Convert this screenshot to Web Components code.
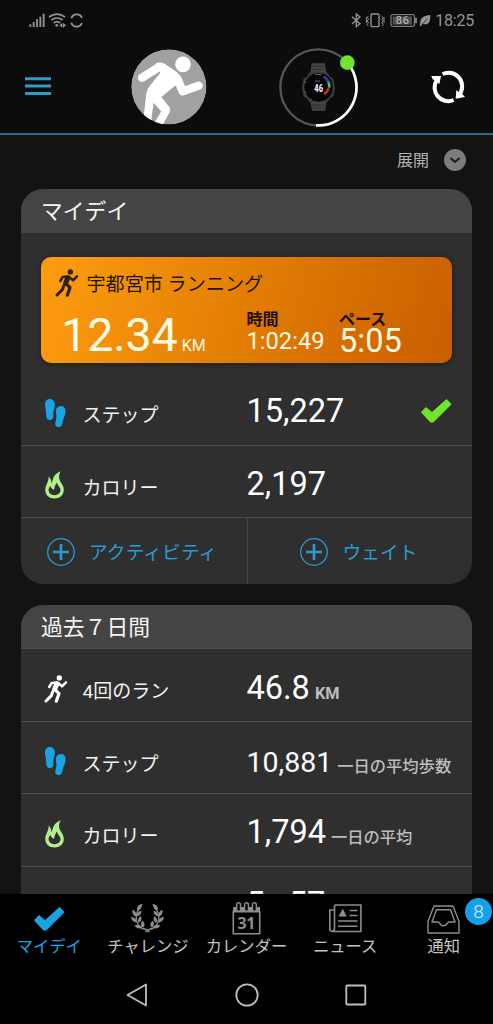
<!DOCTYPE html>
<html lang="ja">
<head>
<meta charset="utf-8">
<title>マイデイ</title>
<style>
html,body{margin:0;background:#131313}
body{width:493px;height:1024px;overflow:hidden;font-family:Roboto,"Noto Sans CJK JP",sans-serif;color:#fff}
</style>
</head>
<body>
<day-app></day-app>
<script>
const define = (name, html) => {
  const t = document.createElement('template');
  t.innerHTML = '<style>*{box-sizing:border-box}svg{display:block}</style>' + html;
  customElements.define(name, class extends HTMLElement {
    constructor() {
      super();
      this.attachShadow({mode: 'open'}).append(t.content.cloneNode(true));
    }
  });
};

const BRANCH = '<path fill="none" stroke="currentColor" stroke-width="1.300" d="M9.500 3.500C3.500 9 3.500 19 11 24.500C13.500 24.500 16 25.500 18.500 28"/><path d="M11.500 0C7 .5 5 3.500 6.800 7C9.500 5.500 11 3 11.500 0ZM1.500 5.800C1 9.500 2.500 12 5.300 12.500C5.800 9 4.500 7 1.500 5.800ZM10.500 6.800C7.500 7.200 5.500 9.500 5.800 12.300C9 12 10.300 10 10.500 6.800ZM0 12.800C.5 16.500 2.500 18.500 6 18.500C5.600 15.200 3.500 13.300 0 12.800ZM9.800 12C7.200 13.700 6.300 16 7.400 18.700C10.400 17.700 11 15 9.800 12ZM3.500 21.500C5.500 24.500 8.500 25.300 11.500 23.500C9.500 20.700 6.700 20 3.500 21.500ZM11 16.800C9.400 19.500 9.800 22 12 23.800C14.500 21.800 13.900 18.700 11 16.800Z"/>';
const ICONS = {
  run: [24, 28, '<circle cx="15.3" cy="2.9" r="2.7" fill="currentColor"/><g fill="none" stroke="currentColor" stroke-linecap="round" stroke-linejoin="round"><path stroke-width="2.500" d="M5.2 12L7.7 8L13.5 7.4L18 11.4L22 7.4"/><path stroke-width="5" d="M12.8 9L10.6 14.2"/><path stroke-width="3.200" d="M11 14.6L15 18.6L12.3 26.2"/><path stroke-width="3" d="M8.6 17L7.4 20.6L2 26"/></g>'],
  steps: [21, 29, '<path fill="currentColor" d="M4.700 0C8 0 9.900 2.600 9.900 5.400C9.900 9 8.200 11 8.300 14C8.400 17 9 21 4.900 21C1.300 21 1.300 18 1.100 14C.9 10 0 8.500 0 5.200C0 2.300 1.700 0 4.700 0ZM16.400 7C13 6.600 11.100 9 10.900 12C10.800 15 12 17 11.200 20.300C10.300 24 9.100 27.200 12.800 27.900C16.400 28.500 17.200 26 17.900 22C18.700 18 20.400 16.500 20.600 12.700C20.800 9.500 19.200 7.300 16.400 7Z"/>'],
  flame: [19, 28, '<path fill="currentColor" fill-rule="evenodd" d="M15.800 .2C13.300 4 13.600 8 15.900 11.500C17.900 14.500 18.800 16.300 18.800 19C18.800 24 14.600 27.500 9.500 27.500C4.300 27.500 .3 24 .3 19C.3 14 4 11 3.600 5.600C5.600 7.800 6.300 9.300 6.500 12.200C8.400 8 8 3 15.800 .2ZM12 11.500C10.800 13 9.500 15.500 9 18.900C6.800 17.900 5.900 16.800 5.400 15C4.200 16.300 3.600 17.400 3.600 19C3.600 22 6 24.200 9.500 24.200C13 24.200 15.500 22 15.500 19C15.500 15.900 12.500 15 12 11.500Z"/>'],
  check: [31, 24, '<path fill="currentColor" stroke="currentColor" stroke-width="1.600" stroke-linejoin="round" d="M1 13.200L5 9L11 14L25.500 1L29.600 5.300L12 22.700L9.800 22.700Z"/>'],
  plus: [28, 28, '<g fill="none" stroke="currentColor"><circle cx="14" cy="14" r="13.300" stroke-width="1.300"/><path stroke-width="2.600" d="M14 6v16M6 14h16"/></g>'],
  laurel: [33, 28, '<g fill="currentColor">' + BRANCH + '</g><g transform="translate(33 0) scale(-1 1)" fill="currentColor">' + BRANCH + '</g>'],
  calendar: [29, 33, '<path fill="currentColor" d="M1 5h27v5.500H1z"/><path fill="none" stroke="currentColor" stroke-width="1.600" d="M1.300 9v22.800h26.400V9"/><g fill="#000" stroke="currentColor" stroke-width="1.400"><rect x="4.700" y=".8" width="3.800" height="8.500" rx="1.900"/><rect x="12.600" y=".8" width="3.800" height="8.500" rx="1.900"/><rect x="20.500" y=".8" width="3.800" height="8.500" rx="1.900"/></g><text x="14.500" y="26.800" text-anchor="middle" font-family="Noto Sans" font-weight="700" font-size="16" textLength="18" fill="currentColor">31</text>'],
  news: [33, 29, '<g fill="none" stroke="currentColor" stroke-width="1.600"><path d="M5.500 1h26.400v26.500H4C2 27.500 .8 26.500 .8 24.500V6H5.500M5.500 1v22.500C5.500 26 5 27.300 3.500 27.300"/><path d="M20.500 6.500h8M20.500 11.500h8M9 17h19.500M9 22.300h19.500"/></g><path fill="currentColor" d="M9.500 12.500L13.700 4.800L17.900 12.500Z"/>'],
  inbox: [33, 29, '<g fill="none" stroke="currentColor" stroke-width="1.400" stroke-linejoin="round"><path d="M7 1h19L32 16.500V28H1V16.500Z"/><path d="M9.500 4.700h14L28 17h-6.500l-3 3.500h-4l-3-3.500H5Z"/></g>'],
};
customElements.define('app-icon', class extends HTMLElement {
  connectedCallback() {
    const [w, h, body] = ICONS[this.getAttribute('name')];
    const root = this.shadowRoot || this.attachShadow({mode: 'open'});
    root.innerHTML = `<style>:host{display:block;flex:none}svg{display:block;overflow:visible}</style><svg width="${w}" height="${h}" viewBox="0 0 ${w} ${h}">${body}</svg>`;
  }
});

define('status-bar', `
<style>
:host{display:flex;height:40px;padding:0 19px 0 29px;align-items:center;justify-content:space-between;color:#949494}
.r{display:flex;align-items:center}
.t{font-size:16px;line-height:20px;margin-left:4px;letter-spacing:-.2px;padding-top:1px}
</style>
<svg width="56" height="18" viewBox="87 30 168 54" fill="none" stroke="currentColor">
<path stroke-width="5.500" d="M91 78V70M101 78V63M111 78V55M121 78V47M131 78V38"/>
<path stroke-width="5" d="M147 48Q171 31 195 48M154 57Q171 45 188 57M161 66Q171 58 181 66"/><circle cx="170" cy="73" r="4" fill="currentColor" stroke="none"/>
<path fill="currentColor" stroke="none" d="M187 66v14l-9-7zM189 66v14l9-7z"/>
<path stroke-width="5.500" d="M214 52A17 17 0 0 1 246 51M214 65A17 17 0 0 0 246 66"/></svg>
<div class="r">
<svg width="80" height="18" viewBox="328 30 240 54" fill="none" stroke="currentColor" stroke-width="4">
<path d="M331 47L355 68L344 77V39L355 48L331 69"/>
<rect x="388" y="39" width="24" height="38" rx="3"/><path d="M380 45l-4 5 5 5-5 5 5 5-5 5 4 5M420 45l5 5-5 5 5 5-5 5 5 5-5 5M374 48v18M427 48v18" stroke-width="3"/>
<rect x="448" y="41" width="70" height="35" rx="4" stroke-width="3"/><rect x="453" y="46" width="58" height="25" fill="#505050" stroke="none"/><path stroke-width="5" d="M523 50v17"/>
<text x="482" y="69" text-anchor="middle" font-family="Roboto" font-size="33" textLength="39" fill="#c0c0c0" stroke="none">86</text>
<path fill="currentColor" stroke="none" d="M566 42C548 44 537 50 536 61C536 68 535 72 534 76L538 75L543 68C562 76 566 60 566 42Z"/><path stroke="#0c0c0c" stroke-width="2" d="M541 71L557 53"/></svg>
<span class="t">18:25</span></div>`);

define('app-header', `
<style>
:host{display:grid;grid-template-columns:131.300px 147px 149px 1fr;height:95px;align-items:start;border-bottom:2px solid #356a87}
.m{margin:37.200px 0 0 25px;width:26px;display:block}
.a{margin-top:9px}.w{margin-top:6.700px}.s{margin:29px 0 0 3px}
</style>
<svg class="m" width="26" height="19" viewBox="0 0 26 19"><path stroke="#3397c8" stroke-width="3" d="M0 1.800h26M0 9.100h26M0 16.400h26"/></svg>
<svg class="a" width="75.700" height="75.700" viewBox="394 147 227 227"><defs><clipPath id="c"><circle cx="507.500" cy="260.500" r="113"/></clipPath></defs>
<g clip-path="url(#c)"><circle cx="507.500" cy="260.500" r="113" fill="#a1a1a1"/><circle cx="550" cy="193" r="23.500" fill="#fff"/>
<path fill="#fff" d="M468 190Q481 184 495 191L532 217Q545 228 546 244L550 262L526 257L485 291L509 321Q514 328 509 338L484 384H455L485 334L462 308L456 350V384H428L440 280Q442 266 453 254L482 218Z"/>
<path fill="none" stroke="#fff" stroke-width="25" stroke-linecap="round" stroke-linejoin="round" d="M427 233L478 201M533 236L549 274L597 257"/></g></svg>
<svg class="w" width="80.700" height="80.700" viewBox="105 140 242 242">
<circle cx="226" cy="261" r="114" fill="none" stroke="#555" stroke-width="7"/><path fill="none" stroke="#fff" stroke-width="8" d="M219 375A114 114 0 0 0 313 187"/>
<path fill="#444" d="M206 189h40l5 35h-50zM201 300h50l-4 31h-40z"/><path stroke="#303030" stroke-width="3" d="M208 198h37M207 207h40M206 315h42M207 323h39"/>
<path fill="#3a3a3a" d="M200 216h52l10 14 9 5 5 27-5 26-9 5-11 14h-50l-11-14-8-4-5-27 4-27 10-5z"/><circle cx="227" cy="261" r="45" fill="#070707" stroke="#606060" stroke-width="2"/>
<g fill="none" stroke-width="8"><path stroke="#4a35a5" d="M242 229A34 34 0 0 1 255 242"/><path stroke="#207fb4" d="M255 242L258 250"/><path stroke="#63c337" d="M257 248Q260 255 258 262"/><path stroke="#bd3c1c" d="M257 264Q253 275 243 281"/></g>
<path stroke="#999" stroke-width="2" d="M216 222h20M216 242h15M190 247l-5-2M190 275l-5 2M206 295l-3 4"/>
<text x="227" y="274" text-anchor="middle" font-family="Roboto" font-weight="700" font-size="33" textLength="26" lengthAdjust="spacingAndGlyphs" fill="#fff">46</text>
<circle cx="313" cy="187" r="22" fill="#70e52c"/></svg>
<svg class="s" width="36" height="36" viewBox="562 207 108 108"><g fill="none" stroke="#fff" stroke-width="12"><path d="M600 222A41 41 0 0 1 650 284"/><path d="M633 300A41 41 0 0 1 583 239"/></g><path fill="#fff" d="M566 228L595 228L590 253L582 245L570 238ZM667 291L639 296L641 270L650 278L661 284Z"/></svg>`);

define('expand-toggle', `
<style>:host{display:flex;justify-content:flex-end;align-items:center;gap:15px;height:54px;padding:0 27px 4px 0;color:#b4b4b4;font-size:16px;line-height:22px}
span{padding-top:1.500px}</style>
<span><slot></slot></span><svg width="22" height="22" viewBox="0 0 22 22"><circle cx="11" cy="11" r="11" fill="#7c7c7c"/><path fill="none" stroke="#191919" stroke-width="2" d="M6.500 9l4.500 4 4.500-4"/></svg>`);

define('summary-card', `
<style>:host{display:block;margin:0 21px 21px 20.500px;border-radius:22px;background:#2f2f2f;overflow:hidden}
header{height:var(--head,43.500px);background:#444;padding:1px 0 0 20.500px;font-size:21.800px;line-height:43px;color:#f4f4f4;border-bottom:var(--line,0)}</style>
<header><slot name="title"></slot></header><slot></slot>`);

define('activity-tile', `
<style>:host{display:block;margin:24px 20px 0 20.500px;height:106px;border-radius:10px;padding:12px 0 0 13.500px;background:linear-gradient(105deg,#ff9d10,#e27d04 50%,#c95e00);box-shadow:0 1px 5px #1b1b1b;color:#fffbe4}
.h{display:flex;gap:8px;color:#1e1305;font-size:19.100px;line-height:28px;height:28px}.h app-icon{color:#2e2109}.h span{padding-top:2px}
.b{display:grid;grid-template-columns:186px 92.500px 1fr;margin-left:6px;height:60px}
.d{font-size:46.500px;line-height:60px;white-space:nowrap;padding:8px 0 0 .5px}.d small{font-size:16px;margin-left:4px}
.k{font-size:16px;font-weight:700;line-height:20px;color:#1c0c00;padding-top:13px;height:32px}
.t{font-size:23.700px;line-height:24px}.p{font-size:32.500px;line-height:24px}
</style>
<div class="h"><app-icon name="run"></app-icon><span><slot name="name"></slot></span></div>
<div class="b"><div class="d"><slot name="distance"></slot><small>KM</small></div>
<div><div class="k">時間</div><div class="t"><slot name="time"></slot></div></div>
<div><div class="k">ペース</div><div class="p"><slot name="pace"></slot></div></div></div>`);

define('stat-row', `
<style>:host{display:grid;grid-template-columns:62px 164px 1fr 51px;height:72.500px;border-bottom:1px solid #4c4c4c;align-items:start}
.i{padding:25.500px 0 0 var(--ix,24px)}.l{font-size:19px;line-height:28px;padding-top:29px;color:#f2f2f2}
.v{display:flex;align-items:baseline;white-space:nowrap;font-size:var(--vs,32.500px);line-height:40px;padding-top:var(--vp,18px)}
.u{font-size:16.300px;font-weight:500;color:#bdbdbd;margin-left:5px}.e{padding-top:26px}</style>
<div class="i"><slot name="icon"></slot></div><div class="l"><slot name="label"></slot></div>
<div class="v"><slot></slot><span class="u"><slot name="unit"></slot></span></div><div class="e"><slot name="end"></slot></div>`);

define('add-actions', `
<style>:host{display:grid;grid-template-columns:226px 1fr;height:65.500px;color:#2b9bd0;font-size:18.700px;line-height:66px}
div{display:flex;align-items:center;gap:14.500px;padding-left:26px}div+div{border-left:1.500px solid #484848;padding-left:52.500px}span{padding-top:2px;letter-spacing:.1px}</style>
<div><app-icon name="plus"></app-icon><span><slot name="a"></slot></span></div><div><app-icon name="plus"></app-icon><span><slot name="b"></slot></span></div>`);

define('tab-item', `
<style>:host{display:flex;flex-direction:column;align-items:center;position:relative;color:#8d8d8d}
.i{height:41px;display:flex;align-items:center}.l{font-size:16.300px;line-height:24px;color:var(--label,#c4c4c4);white-space:nowrap}
::slotted([slot=badge]){position:absolute;right:1px;top:4px;width:27px;height:27px;border-radius:50%;background:#14a0e6;color:#d9f1ff;text-align:center;font-size:19px;font-weight:300;line-height:28px}</style>
<div class="i"><slot name="icon"></slot></div><div class="l"><slot></slot></div><slot name="badge"></slot>`);

define('tab-bar', `<style>:host{display:grid;grid-template-columns:repeat(5,1fr);height:72px}</style><slot></slot>`);

define('system-nav', `
<style>:host{display:flex;justify-content:center;align-items:center;gap:85.500px;height:58px}</style>
<svg width="24" height="24" viewBox="0 0 24 24" fill="none" stroke="#bdbdbd" stroke-width="1.800" stroke-linejoin="round"><path d="M2.500 12L21 1.500v21Z"/></svg>
<svg width="24" height="24" viewBox="0 0 24 24" fill="none" stroke="#bdbdbd" stroke-width="1.800"><circle cx="12" cy="12" r="10.700"/></svg>
<svg width="24" height="24" viewBox="0 0 24 24" fill="none" stroke="#bdbdbd" stroke-width="1.800"><rect x="2.300" y="2.500" width="19" height="19" rx=".8"/></svg>`);

define('day-app', `
<style>:host{display:flex;flex-direction:column;height:1024px;width:493px}
.top{background:#0c0c0c;flex:none}main{flex:1;min-height:0;overflow:hidden}.bottom{background:#000;height:130px;flex:none}
.run{--ix:23px;--vp:18.600px}
.blue{color:#1aa3e4}.lime{color:#b0ef8c}.ok{color:#70e52c}.white{color:#fff}
.sleep{display:flex;align-items:baseline}.sleep small{font-size:16px;width:24px;padding-left:3px}</style>
<div class="top"><status-bar></status-bar><app-header></app-header></div>
<main><expand-toggle>展開</expand-toggle>
<summary-card><span slot="title">マイデイ</span>
<activity-tile><span slot="name">宇都宮市 ランニング</span><span slot="distance">12.34</span><span slot="time">1:02:49</span><span slot="pace">5:05</span></activity-tile>
<stat-row style="margin-top:10.500px"><app-icon slot="icon" name="steps" class="blue"></app-icon><span slot="label">ステップ</span>15,227<app-icon slot="end" name="check" class="ok"></app-icon></stat-row>
<stat-row><app-icon slot="icon" name="flame" class="lime"></app-icon><span slot="label">カロリー</span>2,197</stat-row>
<add-actions><span slot="a">アクティビティ</span><span slot="b">ウェイト</span></add-actions></summary-card>
<summary-card style="--head:44.500px;--line:1px solid #4c4c4c"><span slot="title">過去７日間</span>
<stat-row class="run"><app-icon slot="icon" name="run" class="white"></app-icon><span slot="label">4回のラン</span>46.8<b slot="unit">KM</b></stat-row>
<stat-row style="--vs:28.500px;--vp:21px"><app-icon slot="icon" name="steps" class="blue"></app-icon><span slot="label">ステップ</span>10,881<span slot="unit">一日の平均歩数</span></stat-row>
<stat-row><app-icon slot="icon" name="flame" class="lime"></app-icon><span slot="label">カロリー</span>1,794<span slot="unit">一日の平均</span></stat-row>
<stat-row style="--vp:17px"><span class="sleep"><span>5</span><small>h</small><span>57</span></span></stat-row>
</summary-card></main>
<div class="bottom"><tab-bar>
<tab-item style="--label:#1aa3e4"><app-icon slot="icon" name="check" class="blue" style="margin-top:8px"></app-icon>マイデイ</tab-item>
<tab-item><app-icon slot="icon" name="laurel" style="margin-top:7px"></app-icon>チャレンジ</tab-item>
<tab-item><app-icon slot="icon" name="calendar" style="margin-top:8px"></app-icon>カレンダー</tab-item>
<tab-item><app-icon slot="icon" name="news" style="margin-top:8px"></app-icon>ニュース</tab-item>
<tab-item><app-icon slot="icon" name="inbox" style="margin-top:9px"></app-icon>通知<span slot="badge">8</span></tab-item>
</tab-bar><system-nav></system-nav></div>`);
</script>
</body>
</html>
